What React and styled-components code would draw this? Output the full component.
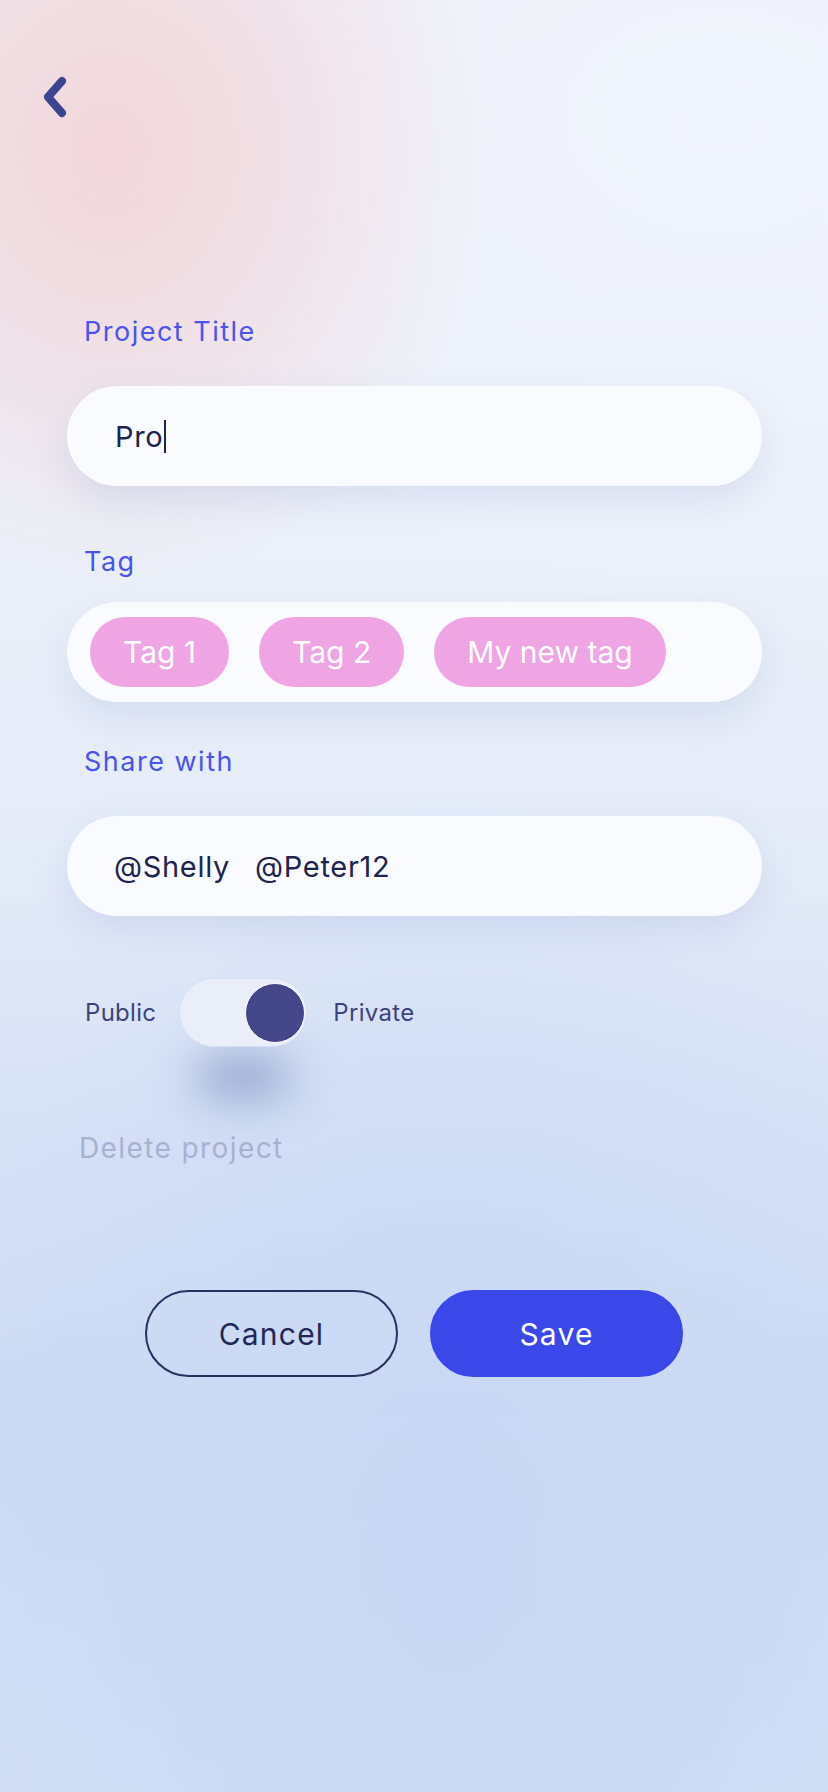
import React from "react";
import styled, { createGlobalStyle } from "styled-components";

const Global = createGlobalStyle`
  html, body { margin: 0; padding: 0; }
  body { font-family: "Inter", "Liberation Sans", sans-serif; }
  * { box-sizing: border-box; }
`;

const Page = styled.div`
  width: 828px;
  min-height: 1792px;
  position: relative;
  overflow: hidden;
  background:
    radial-gradient(ellipse 380px 440px at 110px 150px, rgba(241, 214, 218, 1) 0%, rgba(241, 214, 218, 0.6) 45%, rgba(241, 214, 218, 0) 100%),
    radial-gradient(ellipse 700px 500px at 720px 120px, rgba(240, 244, 252, 1) 0%, rgba(240, 244, 252, 0) 100%),
    radial-gradient(ellipse 520px 760px at 450px 1560px, rgba(200, 216, 244, 1) 0%, rgba(200, 216, 244, 0) 100%),
    linear-gradient(180deg, #eff1f8 0%, #ebf0f9 30%, #e4ebf8 48%, #d6e1f5 63%, #cddaf4 78%, #d1def5 100%);
  padding-top: 76px;
`;

const BackButton = styled.button`
  display: block;
  margin-left: 40px;
  width: 32px;
  height: 42px;
  padding: 0;
  border: none;
  background: none;
  cursor: pointer;
`;

const Form = styled.div`
  margin: 194px 0 0 67px;
  width: 695px;
  display: flex;
  flex-direction: column;
`;

const Label = styled.div`
  font-size: 27px;
  line-height: 40px;
  height: 40px;
  padding-left: 17px;
  color: #4a53ec;
  font-weight: 400;
  margin-top: ${(p) => p.$top}px;
  margin-bottom: ${(p) => p.$gap}px;
  letter-spacing: 1.5px;
`;

const Field = styled.div`
  height: 100px;
  border-radius: 50px;
  background: #f9fbfe;
  box-shadow: 0 14px 34px rgba(130, 145, 200, 0.18);
  display: flex;
  align-items: center;
  padding-left: ${(p) => p.$pad}px;
  gap: ${(p) => p.$gap || 0}px;
  font-size: 29px;
  letter-spacing: 0.7px;
  color: #1e2450;
`;

const Caret = styled.span`
  display: inline-block;
  width: 2px;
  height: 33px;
  margin-left: 1px;
  background: #1e2450;
`;

const Chip = styled.span`
  height: 70px;
  border-radius: 35px;
  padding: 0 33px;
  background: #efa4e3;
  color: #ffffff;
  font-size: 30px;
  letter-spacing: 0;
  display: inline-flex;
  align-items: center;
`;

const ToggleRow = styled.div`
  margin-top: 62px;
  padding-left: 18px;
  display: flex;
  align-items: center;
  font-size: 24px;
  letter-spacing: 0.3px;
  color: #3d437d;
`;

const Track = styled.div`
  margin: 0 26px 0 23px;
  width: 128px;
  height: 69px;
  border-radius: 35px;
  background: #e9eef9;
  border: 1.5px solid #d6e0f7;
  box-shadow: 0 64px 46px -18px rgba(70, 90, 160, 0.55);
  display: flex;
  align-items: center;
  justify-content: ${(p) => (p.$on ? "flex-end" : "flex-start")};
  padding: 0 1px;
`;

const Knob = styled.div`
  width: 60px;
  height: 60px;
  border-radius: 50%;
  background: #434689;
  border: 1.5px solid #ffffff;
`;

const DeleteLink = styled.div`
  margin-top: 81px;
  padding-left: 12px;
  font-size: 28px;
  letter-spacing: 1.4px;
  line-height: 40px;
  color: #a8b1d4;
`;

const Actions = styled.div`
  margin-top: 122px;
  display: flex;
  justify-content: center;
  gap: 32px;
`;

const Button = styled.button`
  width: 253px;
  height: 87px;
  border-radius: 44px;
  font-family: inherit;
  font-size: 30px;
  letter-spacing: 1.2px;
  cursor: pointer;
  border: 2px solid ${(p) => (p.$primary ? "#3a47e9" : "#28305f")};
  background: ${(p) => (p.$primary ? "#3a47e9" : "transparent")};
  color: ${(p) => (p.$primary ? "#ffffff" : "#1f2756")};
`;

export default function App() {
  return (
    <Page>
      <Global />
      <BackButton aria-label="Back">
        <svg width="32" height="42" viewBox="0 0 32 42">
          <path d="M22 5 L8 21 L22 37" fill="none" stroke="#3b4490" strokeWidth="8" strokeLinecap="round" strokeLinejoin="round" />
        </svg>
      </BackButton>
      <Form>
        <Label $top={0} $gap={34}>Project Title</Label>
        <Field $pad={48}>
          <span>Pro</span>
          <Caret />
        </Field>

        <Label $top={56} $gap={20}>Tag</Label>
        <Field $pad={23} $gap={30}>
          <Chip>Tag 1</Chip>
          <Chip>Tag 2</Chip>
          <Chip>My new tag</Chip>
        </Field>

        <Label $top={40} $gap={34}>Share with</Label>
        <Field $pad={47} $gap={25}>
          <span>@Shelly</span>
          <span>@Peter12</span>
        </Field>

        <ToggleRow>
          <span>Public</span>
          <Track $on>
            <Knob />
          </Track>
          <span>Private</span>
        </ToggleRow>

        <DeleteLink>Delete project</DeleteLink>
      </Form>
      <Actions>
        <Button>Cancel</Button>
        <Button $primary>Save</Button>
      </Actions>
    </Page>
  );
}
